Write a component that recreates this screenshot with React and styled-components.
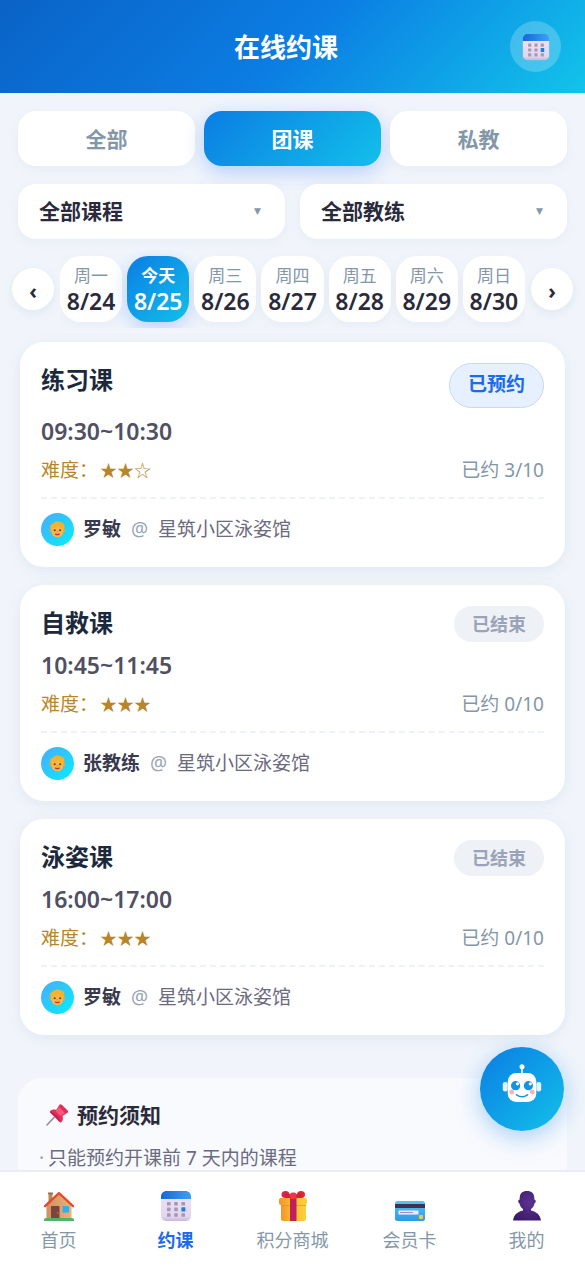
import React from "react";
import styled, { createGlobalStyle, css } from "styled-components";

const GlobalStyle = createGlobalStyle`
  * {
    box-sizing: border-box;
  }
  body {
    margin: 0;
    background: #f1f5fb;
  }
  body, button, select {
    font-family: "Noto Sans", "Noto Sans CJK SC", sans-serif;
  }
`;

const blueGradient = "linear-gradient(135deg, #0b7de3 0%, #12c0ea 100%)";

const tabs = ["全部", "团课", "私教"];

const days = [
  { label: "周一", date: "8/24" },
  { label: "今天", date: "8/25" },
  { label: "周三", date: "8/26" },
  { label: "周四", date: "8/27" },
  { label: "周五", date: "8/28" },
  { label: "周六", date: "8/29" },
  { label: "周日", date: "8/30" },
];

const lessons = [
  {
    name: "练习课",
    time: "09:30~10:30",
    stars: "★★☆",
    booked: "3/10",
    coach: "罗敏",
    place: "星筑小区泳姿馆",
    mine: true,
  },
  {
    name: "自救课",
    time: "10:45~11:45",
    stars: "★★★",
    booked: "0/10",
    coach: "张教练",
    place: "星筑小区泳姿馆",
  },
  {
    name: "泳姿课",
    time: "16:00~17:00",
    stars: "★★★",
    booked: "0/10",
    coach: "罗敏",
    place: "星筑小区泳姿馆",
  },
];

const CalendarIcon = ({ size, id }) => (
  <svg width={size} height={size} viewBox="0 0 32 32" aria-hidden="true">
    <defs>
      <linearGradient id={id + "-top"} x1="0" x2="1">
        <stop offset="0" stopColor="#1667d8" />
        <stop offset="1" stopColor="#3da0f8" />
      </linearGradient>
      <linearGradient id={id + "-page"} x1="0" y1="0" x2="0" y2="1">
        <stop offset="0" stopColor="#efe3f5" />
        <stop offset="0.85" stopColor="#e2d6ef" />
        <stop offset="1" stopColor="#c9b5dc" />
      </linearGradient>
    </defs>
    <rect x="1" y="3" width="30" height="28" rx="5" fill={`url(#${id}-page)`} />
    <path
      d="M1 9V6.500C1 3.400 3.400 1 6.500 1h19C28.600 1 31 3.400 31 6.500V9z"
      fill={`url(#${id}-top)`}
    />
    <g fill="#a598b5">
      <rect x="7" y="12" width="3.600" height="3.600" rx=".6" />
      <rect x="14.200" y="12" width="3.600" height="3.600" rx=".6" />
      <rect x="21.400" y="12" width="3.600" height="3.600" rx=".6" />
      <rect x="7" y="17.600" width="3.600" height="3.600" rx=".6" />
      <rect x="14.200" y="17.600" width="3.600" height="3.600" rx=".6" />
      <rect x="21.400" y="17.200" width="4" height="4.400" rx=".6" fill="#1b82dc" />
      <rect x="7" y="23.200" width="3.600" height="3.600" rx=".6" />
      <rect x="14.200" y="23.200" width="3.600" height="3.600" rx=".6" />
      <rect x="21.400" y="23.200" width="3.600" height="3.600" rx=".6" />
    </g>
  </svg>
);

const HouseIcon = () => (
  <svg width="32" height="32" viewBox="0 0 32 32" aria-hidden="true">
    <defs>
      <linearGradient id="wall" x1="0" x2="1">
        <stop offset="0" stopColor="#cf925f" />
        <stop offset="1" stopColor="#e9b27c" />
      </linearGradient>
    </defs>
    <rect x="5.500" y="3" width="4" height="10" fill="#b98a55" />
    <rect x="5" y="2.500" width="5" height="1.800" fill="#9a6f45" />
    <path d="M3.500 15.500 16 4l12.500 11.500V29h-25z" fill="url(#wall)" />
    <path
      d="M2 16.200 16 3.200l14 13"
      fill="none"
      stroke="#e2492f"
      strokeWidth="2.300"
      strokeLinejoin="round"
      strokeLinecap="round"
    />
    <rect x="8" y="16" width="8.500" height="13" rx=".8" fill="#7a4540" />
    <circle cx="14.600" cy="23" r=".7" fill="#c98f5a" />
    <rect x="19.500" y="16" width="6.500" height="6.500" rx=".6" fill="#2bb0f0" />
    <path
      d="M1 31v-1.200c0-1.200 1-1.900 2.200-1.900h25.600c1.200 0 2.200.7 2.200 1.900V31z"
      fill="#52b265"
    />
  </svg>
);

const GiftIcon = () => (
  <svg width="32" height="32" viewBox="0 0 32 32" aria-hidden="true">
    <defs>
      <linearGradient id="box" x1="0" x2="1">
        <stop offset="0" stopColor="#f3942c" />
        <stop offset="0.450" stopColor="#fbbd2f" />
        <stop offset="1" stopColor="#f8d03c" />
      </linearGradient>
    </defs>
    <rect x="4" y="11" width="25" height="20" rx="2" fill="url(#box)" />
    <rect x="2" y="8" width="28" height="7" rx="2" fill="url(#box)" />
    <path d="M4 15h25v1H4z" fill="#e08b25" opacity=".6" />
    <rect x="13" y="7" width="6.500" height="24" fill="#c01f5b" />
    <ellipse cx="8.500" cy="4.500" rx="4" ry="3.500" fill="#e0243c" />
    <ellipse cx="24" cy="4.500" rx="4" ry="3.500" fill="#e0243c" />
    <path d="M8 3 16 5l8.500-2v5H8z" fill="#d11f3d" />
    <rect x="13" y="2.500" width="6.500" height="6.500" rx="2.500" fill="#ee3350" />
  </svg>
);

const CardIcon = () => (
  <svg width="32" height="32" viewBox="0 0 32 32" aria-hidden="true">
    <defs>
      <linearGradient id="plastic" x1="0" y1="0" x2="0" y2="1">
        <stop offset="0" stopColor="#55c5f3" />
        <stop offset="1" stopColor="#2a9ce5" />
      </linearGradient>
    </defs>
    <rect x="1" y="11" width="30" height="20" rx="2.500" fill="url(#plastic)" />
    <rect x="1" y="14" width="30" height="4" fill="#3b3450" />
    <rect x="4.500" y="20.500" width="20" height="4" fill="#f0eaf7" />
    <path d="M6 22.500h13" stroke="#a77bb0" strokeWidth=".9" />
    <rect x="25" y="25" width="4" height="4" rx=".8" fill="#f6ca3f" />
  </svg>
);

const UserIcon = () => (
  <svg width="32" height="32" viewBox="0 0 32 32" aria-hidden="true">
    <defs>
      <radialGradient id="bust" cx=".6" cy=".4" r=".7">
        <stop offset="0" stopColor="#5b3391" />
        <stop offset="1" stopColor="#3a1a68" />
      </radialGradient>
    </defs>
    <path
      d="M16 1c4.600 0 7.300 2.500 7.300 7v1.500c1.700-.1 2 3.400.2 3.900-.5 2.600-1.700 4.300-3.500 5.700v1.400c5.500 1.300 9 4 10 10H2c1-6 4.500-8.700 10-10v-1.400c-1.800-1.400-3-3.100-3.500-5.700-1.800-.5-1.500-4 .2-3.900V8c0-4.500 2.700-7 7.300-7z"
      fill="url(#bust)"
    />
  </svg>
);

const PinIcon = () => (
  <svg width="24" height="24" viewBox="0 0 24 24" aria-hidden="true">
    <path d="M2 22 9 14.500" stroke="#928ca0" strokeWidth="1.600" strokeLinecap="round" />
    <path
      d="M14 2.500c.8-1.600 2-1.600 3-.6l5.400 5.400c1 1 1 2.300-.7 3l-4.200 2.700c.9 2.300.3 4.900-1.200 6.200-.6.500-1.300.4-1.800-.1L5.200 9.800c-.5-.5-.5-1.300 0-1.800 1.500-1.500 3.900-1.900 6-1z"
      fill="#e32c57"
    />
    <path d="m14 4 6 6-4.500 3-5-5z" fill="#f4587b" />
    <path d="M6 9.500c3 1.500 7 5.500 8.500 8.500" stroke="#b61f4a" strokeWidth="1.200" fill="none" />
  </svg>
);

const FaceIcon = () => (
  <svg width="17" height="17" viewBox="0 0 17 17" aria-hidden="true">
    <path
      d="M2 9C.2 5.500 1.600 3 4.200 2.600 5.700.4 9.400.1 11.500 1.300c3 .1 4.700 3 3.700 6.400L14 11H3z"
      fill="#f3b32b"
    />
    <circle cx="1.900" cy="9.600" r="1.500" fill="#f0a33c" />
    <circle cx="15" cy="9.600" r="1.500" fill="#f0a33c" />
    <path
      d="M2.500 7.500C5 7.500 7 6.400 8.500 5c1.500 1.600 3.500 2.400 5.800 2.500v3c0 3.400-2.500 5.800-5.900 5.800s-5.900-2.400-5.900-5.800z"
      fill="#fbb83f"
    />
    <circle cx="5.700" cy="9.300" r="1" fill="#553a48" />
    <circle cx="11.100" cy="9.300" r="1" fill="#553a48" />
    <path d="M7.500 10.800h1.800" stroke="#e58a2e" strokeWidth=".9" />
    <path d="M6.200 12.900q2.200 1.500 4.400 0" stroke="#c0393b" strokeWidth="1.300" fill="none" />
  </svg>
);

const RobotIcon = () => (
  <svg width="40" height="40" viewBox="0 0 40 40" aria-hidden="true">
    <path d="M20 4v8" stroke="#fff" strokeWidth="1.600" />
    <circle cx="20" cy="3.700" r="2.500" fill="#fff" />
    <rect x=".8" y="19" width="4.800" height="9.500" rx="2.200" fill="#e4f4fd" />
    <rect x="34.400" y="19" width="4.800" height="9.500" rx="2.200" fill="#e4f4fd" />
    <rect x="5.700" y="10" width="28.600" height="29" rx="8.500" fill="#fff" />
    <circle cx="13.600" cy="22.700" r="4.600" fill="#1294e0" />
    <circle cx="26.400" cy="22.700" r="4.600" fill="#1294e0" />
    <circle cx="15.500" cy="20.800" r="1.600" fill="#fff" />
    <circle cx="28.300" cy="20.800" r="1.600" fill="#fff" />
    <circle cx="9.700" cy="29" r="2.400" fill="#fcb0b8" />
    <circle cx="30.300" cy="29" r="2.400" fill="#fcb0b8" />
    <path
      d="M14.500 31.800q5.500 4 11 0"
      stroke="#1294e0"
      strokeWidth="1.500"
      strokeLinecap="round"
      fill="none"
    />
  </svg>
);

const navItems = [
  { label: "首页", icon: <HouseIcon /> },
  { label: "约课", icon: <CalendarIcon size={32} id="nav-calendar" />, active: true },
  { label: "积分商城", icon: <GiftIcon /> },
  { label: "会员卡", icon: <CardIcon /> },
  { label: "我的", icon: <UserIcon /> },
];

const App = () => {
  const [tab, setTab] = React.useState(1);
  const [day, setDay] = React.useState(1);

  return (
    <Page>
      <GlobalStyle />
      <Header>
        <span />
        <HeaderTitle>在线约课</HeaderTitle>
        <HeaderButton aria-label="我的预约">
          <CalendarIcon size={28} id="head-calendar" />
        </HeaderButton>
      </Header>

      <Main>
        <Tabs>
          {tabs.map((item, index) => (
            <Tab key={item} $active={index === tab} onClick={() => setTab(index)}>
              {item}
            </Tab>
          ))}
        </Tabs>

        <Filters>
          {["全部课程", "全部教练"].map((item) => (
            <SelectBox key={item}>
              <Select aria-label={item}>
                <option>{item}</option>
              </Select>
              <Caret aria-hidden="true">▼</Caret>
            </SelectBox>
          ))}
        </Filters>

        <Week>
          <Arrow aria-label="上一周">‹</Arrow>
          <DayStrip>
            {days.map((item, index) => (
              <Day key={item.date} $active={index === day} onClick={() => setDay(index)}>
                <DayName>{item.label}</DayName>
                <DayDate>{item.date}</DayDate>
              </Day>
            ))}
          </DayStrip>
          <Arrow aria-label="下一周">›</Arrow>
        </Week>

        <LessonList>
          {lessons.map((item) => (
            <Lesson key={item.time}>
              <LessonHead>
                <LessonName>{item.name}</LessonName>
                {item.mine ? <BookedButton>已预约</BookedButton> : <Ended>已结束</Ended>}
              </LessonHead>
              <Time>{item.time}</Time>
              <Meta>
                <Level>
                  难度：<Stars>{item.stars}</Stars>
                </Level>
                <span>已约 {item.booked}</span>
              </Meta>
              <LessonFoot>
                <Avatar>
                  <FaceIcon />
                </Avatar>
                <Coach>{item.coach}</Coach>
                <At>@</At>
                <span>{item.place}</span>
              </LessonFoot>
            </Lesson>
          ))}
        </LessonList>

        <Notice>
          <NoticeTitle>
            <PinIcon />
            预约须知
          </NoticeTitle>
          <NoticeList>
            <li>只能预约开课前 7 天内的课程</li>
          </NoticeList>
        </Notice>
      </Main>

      <Nav>
        {navItems.map((item) => (
          <NavLink href="#" key={item.label} $active={item.active}>
            {item.icon}
            {item.label}
          </NavLink>
        ))}
      </Nav>

      <Robot aria-label="智能客服">
        <RobotIcon />
      </Robot>
    </Page>
  );
};

export default App;

const Page = styled.div`
  display: flex;
  flex-direction: column;
  height: 100vh;
  color: #2a2a3c;
  background: #f1f5fb;
`;

const Header = styled.header`
  display: grid;
  grid-template-columns: 38px 1fr 51px;
  align-items: center;
  flex-shrink: 0;
  padding: 21px 24px;
  background: linear-gradient(135deg, #0a62c6 0%, #0b7de3 50%, #12c4ea 100%);
`;

const HeaderTitle = styled.h1`
  margin: 0;
  font-size: 26px;
  line-height: 36px;
  font-weight: 700;
  text-align: center;
  color: #fff;
`;

const HeaderButton = styled.button`
  display: flex;
  align-items: center;
  justify-content: center;
  height: 51px;
  padding: 0;
  border: none;
  border-radius: 50%;
  background: rgba(255, 255, 255, 0.22);
  cursor: pointer;
`;

const Main = styled.main`
  flex: 1;
  min-height: 0;
  overflow-y: auto;
  scrollbar-width: none;
  padding: 18px 0;
`;

const Tabs = styled.div`
  display: flex;
  gap: 9px;
  padding: 0 18px;
`;

const Tab = styled.button`
  flex: 1;
  height: 55px;
  padding: 0 0 2px;
  border: none;
  border-radius: 18px;
  font-size: 21px;
  font-weight: 700;
  color: #8497a8;
  background: #fff;
  box-shadow: 0 3px 12px rgba(30, 60, 120, 0.05);
  cursor: pointer;
  ${(props) =>
    props.$active &&
    css`
      color: #fff;
      background: ${blueGradient};
      box-shadow: 0 6px 20px rgba(22, 104, 255, 0.28);
    `}
`;

const Filters = styled.div`
  display: flex;
  gap: 15px;
  margin-top: 18px;
  padding: 0 18px;
`;

const SelectBox = styled.div`
  position: relative;
  flex: 1;
`;

const Select = styled.select`
  display: block;
  width: 100%;
  height: 55px;
  padding: 0 48px 2px 21px;
  border: none;
  border-radius: 18px;
  appearance: none;
  font-size: 21px;
  font-weight: 700;
  color: #2a2a3c;
  background: #fff;
  box-shadow: 0 3px 12px rgba(30, 60, 120, 0.05);
`;

const Caret = styled.span`
  position: absolute;
  top: 0;
  right: 24px;
  font-family: "DejaVu Sans", sans-serif;
  font-size: 9px;
  line-height: 55px;
  color: #8497a8;
  pointer-events: none;
`;

const Week = styled.div`
  display: flex;
  align-items: center;
  gap: 6px;
  margin-top: 11px;
  padding: 0 12px;
`;

const Arrow = styled.button`
  flex-shrink: 0;
  width: 42px;
  height: 42px;
  padding: 4px 0 0;
  border: none;
  border-radius: 50%;
  font-size: 21px;
  font-weight: 700;
  line-height: 38px;
  color: #2a2a3c;
  background: #fff;
  box-shadow: 0 3px 12px rgba(30, 60, 120, 0.08);
  cursor: pointer;
`;

const DayStrip = styled.div`
  display: flex;
  flex: 1;
  gap: 5px;
  min-width: 0;
  padding: 6px 0;
  overflow: hidden;
`;

const DayName = styled.span`
  font-size: 17px;
  line-height: 24px;
  color: #8497a8;
`;

const DayDate = styled.span`
  font-size: 23px;
  line-height: 26px;
  font-weight: 600;
`;

const Day = styled.button`
  display: flex;
  flex: 1;
  flex-direction: column;
  align-items: center;
  min-width: 0;
  padding: 8px 0;
  border: none;
  border-radius: 21px;
  color: #2a2a3c;
  background: #fff;
  box-shadow: 0 3px 12px rgba(30, 60, 120, 0.05);
  cursor: pointer;
  ${(props) =>
    props.$active &&
    css`
      color: #fff;
      background: ${blueGradient};
      box-shadow: 0 6px 18px rgba(22, 104, 255, 0.25);
      ${DayName} {
        color: #fff;
        font-weight: 700;
      }
    `}
`;

const LessonList = styled.section`
  display: flex;
  flex-direction: column;
  gap: 18px;
  margin-top: 14px;
  padding: 0 20px;
`;

const Lesson = styled.article`
  padding: 21px;
  border-radius: 24px;
  background: #fff;
  box-shadow: 0 3px 16px rgba(30, 60, 120, 0.07);
`;

const LessonHead = styled.div`
  display: flex;
  align-items: flex-start;
  justify-content: space-between;
`;

const LessonName = styled.h2`
  margin: 0;
  font-size: 24px;
  line-height: 34px;
  font-weight: 700;
  color: #1a2a3c;
`;

const BookedButton = styled.button`
  height: 45px;
  padding: 0 18px 5px;
  border: 1px solid #c5d9f8;
  border-radius: 24px;
  font-size: 19px;
  font-weight: 700;
  color: #1a6bea;
  background: #e7f0fe;
  cursor: pointer;
`;

const Ended = styled.span`
  padding: 0 18px;
  border-radius: 18px;
  font-size: 18px;
  line-height: 36px;
  font-weight: 700;
  color: #9aa3b8;
  background: #eef1f6;
`;

const Time = styled.div`
  margin-top: 7px;
  font-size: 23px;
  line-height: 32px;
  font-weight: 600;
  color: #505062;
`;

const Meta = styled.div`
  display: flex;
  justify-content: space-between;
  margin-top: 8px;
  font-size: 19px;
  line-height: 30px;
  color: #8497a8;
`;

const Level = styled.span`
  color: #b8862a;
`;

const Stars = styled.span`
  margin-left: 2px;
  font-family: "Noto Sans CJK SC", sans-serif;
  font-size: 17px;
`;

const LessonFoot = styled.div`
  display: flex;
  align-items: center;
  gap: 9px;
  margin-top: 12px;
  padding-top: 14px;
  border-top: 2px dashed #eef1f6;
  font-size: 19px;
  line-height: 33px;
  color: #6b6b80;
`;

const Avatar = styled.span`
  display: flex;
  align-items: center;
  justify-content: center;
  width: 33px;
  height: 33px;
  border-radius: 50%;
  background: linear-gradient(135deg, #4aabfd 0%, #05eefe 100%);
`;

const Coach = styled.strong`
  color: #3a3a4e;
`;

const At = styled.span`
  padding: 0 1px;
  color: #9aa3b8;
`;

const Notice = styled.section`
  margin: 43px 18px 0;
  padding: 21px;
  border-radius: 24px;
  background: #f8fafe;
`;

const NoticeTitle = styled.h3`
  display: flex;
  align-items: center;
  gap: 8px;
  margin: 0;
  padding-left: 6px;
  font-size: 21px;
  line-height: 32px;
  font-weight: 700;
`;

const NoticeList = styled.ul`
  margin: 10px 0 0;
  padding: 0;
  list-style: none;
  font-size: 19px;
  line-height: 34px;
  color: #6b6b80;

  li::before {
    content: "·";
    margin-right: 4px;
    color: #9aa3b8;
  }
`;

const Nav = styled.nav`
  display: flex;
  flex-shrink: 0;
  padding: 18px 0 11px;
  border-top: 2px solid #e9edf5;
  background: #fff;
`;

const NavLink = styled.a`
  display: flex;
  flex: 1;
  flex-direction: column;
  align-items: center;
  gap: 4px;
  padding-bottom: 1px;
  font-size: 18px;
  line-height: 28px;
  text-decoration: none;
  color: ${(props) => (props.$active ? "#1a6bea" : "#8497a8")};
  font-weight: ${(props) => (props.$active ? 700 : 400)};
`;

const Robot = styled.button`
  position: fixed;
  right: 21px;
  bottom: 135px;
  display: flex;
  align-items: center;
  justify-content: center;
  width: 84px;
  height: 84px;
  padding: 0 0 12px;
  border: none;
  border-radius: 50%;
  background: ${blueGradient};
  box-shadow: 0 6px 24px rgba(11, 125, 227, 0.35);
  cursor: pointer;
`;
